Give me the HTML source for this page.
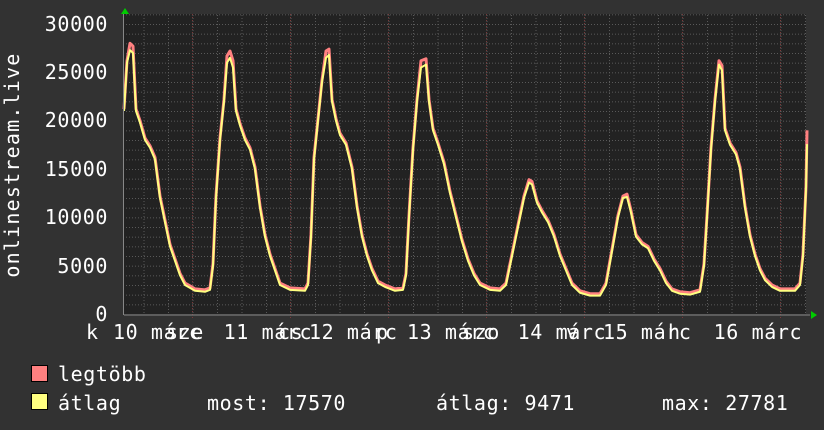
<!DOCTYPE html>
<html><head><meta charset="utf-8"><style>
body{margin:0;background:#323232;width:824px;height:430px;overflow:hidden;position:relative;font-family:"DejaVu Sans Mono","Liberation Mono",monospace;color:#fff}
.t{position:absolute;font-size:20px;letter-spacing:0.6px;white-space:pre;line-height:20px}
.y{right:716px;text-align:right}
</style></head><body>
<svg width="824" height="430" style="position:absolute;left:0;top:0">
<defs>
<pattern id="vg" x="143.5" y="0" width="24.5" height="430" patternUnits="userSpaceOnUse">
<line x1="0.5" y1="0" x2="0.5" y2="430" stroke="#5a5a5a" stroke-dasharray="1,2"/>
</pattern>
<pattern id="hg" x="0" y="4.67" width="824" height="9.667" patternUnits="userSpaceOnUse">
<line x1="0" y1="0.5" x2="824" y2="0.5" stroke="#5a5a5a" stroke-dasharray="1,2"/>
</pattern>
</defs>
<rect x="124" y="14" width="682" height="300" fill="#222"/>
<rect x="124" y="14" width="682" height="300" fill="url(#vg)"/>
<rect x="124" y="14" width="682" height="300" fill="url(#hg)"/>
<g stroke="#7a3a3a" stroke-dasharray="1,2">
<line x1="192.5" y1="14" x2="192.5" y2="318"/><line x1="290.5" y1="14" x2="290.5" y2="318"/><line x1="388.5" y1="14" x2="388.5" y2="318"/><line x1="486.5" y1="14" x2="486.5" y2="318"/><line x1="584.5" y1="14" x2="584.5" y2="318"/><line x1="682.5" y1="14" x2="682.5" y2="318"/><line x1="780.5" y1="14" x2="780.5" y2="318"/>
</g>
<g transform="translate(0,314) scale(1,-0.009667)" fill="none" stroke-linejoin="round">
<polyline vector-effect="non-scaling-stroke" stroke="#ff8080" stroke-width="3" transform="translate(0,200)" points="124,21000 127,26000 130,27800 133,27500 136,21000 140,19800 145,18000 150,17200 155,16000 160,12000 165,9500 170,7000 175,5500 180,4000 185,3000 190,2700 195,2400 205,2300 210,2500 213,5000 216,12000 220,18000 224,22000 227,26500 230,27000 233,26000 236,21000 240,19500 245,18000 250,17000 255,15000 260,11000 265,8000 270,6000 275,4500 280,3000 290,2500 305,2400 308,3000 311,8000 314,16000 318,20000 322,24000 326,27000 329,27200 332,22000 336,20000 340,18500 346,17500 352,15000 357,11000 362,8000 367,6000 372,4500 378,3200 385,2800 395,2400 403,2500 406,4000 409,10000 413,17000 417,22000 421,26000 426,26200 429,22000 433,19000 438,17500 444,15500 450,12500 456,10000 462,7500 468,5500 474,4000 480,3000 490,2500 500,2400 506,3000 512,6000 518,9000 524,12000 529,13700 532,13500 537,11500 542,10500 548,9500 554,8000 560,6000 566,4500 572,3000 580,2200 590,1900 600,1900 606,3000 612,6500 618,10000 623,12000 627,12200 631,10500 636,8000 642,7200 648,6800 654,5500 660,4500 666,3200 672,2400 680,2100 690,2000 700,2300 704,5000 707,10000 711,17000 715,22000 719,26000 722,25500 725,19000 730,17500 736,16500 740,15000 745,11000 750,8000 755,6000 760,4500 765,3500 772,2800 780,2400 795,2400 800,3000 803,6000 806,13000 807,18800"/>
<polyline vector-effect="non-scaling-stroke" stroke="#ffff80" stroke-width="2" points="124,21000 127,26000 130,27300 133,27000 136,21000 140,19800 145,18000 150,17200 155,16000 160,12000 165,9500 170,7000 175,5500 180,4000 185,3000 190,2700 195,2400 205,2300 210,2500 213,5000 216,12000 220,18000 224,22000 227,26000 230,26500 233,25500 236,21000 240,19500 245,18000 250,17000 255,15000 260,11000 265,8000 270,6000 275,4500 280,3000 290,2500 305,2400 308,3000 311,8000 314,16000 318,20000 322,24000 326,26500 329,26800 332,22000 336,20000 340,18500 346,17500 352,15000 357,11000 362,8000 367,6000 372,4500 378,3200 385,2800 395,2400 403,2500 406,4000 409,10000 413,17000 417,22000 421,25500 426,25800 429,22000 433,19000 438,17500 444,15500 450,12500 456,10000 462,7500 468,5500 474,4000 480,3000 490,2500 500,2400 506,3000 512,6000 518,9000 524,12000 529,13600 532,13400 537,11500 542,10500 548,9500 554,8000 560,6000 566,4500 572,3000 580,2200 590,1900 600,1900 606,3000 612,6500 618,10000 623,12000 627,12100 631,10500 636,8000 642,7200 648,6800 654,5500 660,4500 666,3200 672,2400 680,2100 690,2000 700,2300 704,5000 707,10000 711,17000 715,22000 719,25800 722,25200 725,19000 730,17500 736,16500 740,15000 745,11000 750,8000 755,6000 760,4500 765,3500 772,2800 780,2400 795,2400 800,3000 803,6000 806,13000 807,17570"/>
</g>
<line x1="124" y1="315" x2="810" y2="315" stroke="#888" stroke-width="1"/>
<line x1="123.5" y1="12" x2="123.5" y2="315" stroke="#888" stroke-width="1"/>
<polygon points="121,14 125,8 129,14" fill="#00cc00"/>
<polygon points="811,311 817,315 811,319" fill="#00cc00"/>
<rect x="31.5" y="365.5" width="16" height="16" fill="#ff8080" stroke="#000"/>
<rect x="31.5" y="393.5" width="16" height="16" fill="#ffff80" stroke="#000"/>
</svg>
<div class="t y" style="top:14px">30000</div>
<div class="t y" style="top:62px">25000</div>
<div class="t y" style="top:110px">20000</div>
<div class="t y" style="top:159px">15000</div>
<div class="t y" style="top:207px">10000</div>
<div class="t y" style="top:256px">5000</div>
<div class="t y" style="top:304px">0</div>
<div class="t" style="left:-108px;top:155px;width:240px;text-align:center;transform:rotate(-90deg);letter-spacing:1.2px">onlinestream.live</div>
<div class="t" style="left:86px;top:322px">k</div>
<div class="t" style="left:113px;top:322px">10 márc</div>
<div class="t" style="left:166px;top:322px">sze</div>
<div class="t" style="left:211px;top:322px"> 11 márc</div>
<div class="t" style="left:278px;top:322px">cs</div>
<div class="t" style="left:309px;top:322px">12 márc</div>
<div class="t" style="left:376px;top:322px">p</div>
<div class="t" style="left:407px;top:322px">13 márc</div>
<div class="t" style="left:462px;top:322px">szo</div>
<div class="t" style="left:505px;top:322px"> 14 márc</div>
<div class="t" style="left:566px;top:322px">v</div>
<div class="t" style="left:603px;top:322px">15 márc</div>
<div class="t" style="left:668px;top:322px">h</div>
<div class="t" style="left:701px;top:322px"> 16 márc</div>
<div class="t" style="left:58px;top:364px">legtöbb</div>
<div class="t" style="left:58px;top:393px">átlag</div>
<div class="t" style="left:207px;top:393px">most: 17570</div>
<div class="t" style="left:436px;top:393px">átlag: 9471</div>
<div class="t" style="left:662px;top:393px">max: 27781</div>
</body></html>
